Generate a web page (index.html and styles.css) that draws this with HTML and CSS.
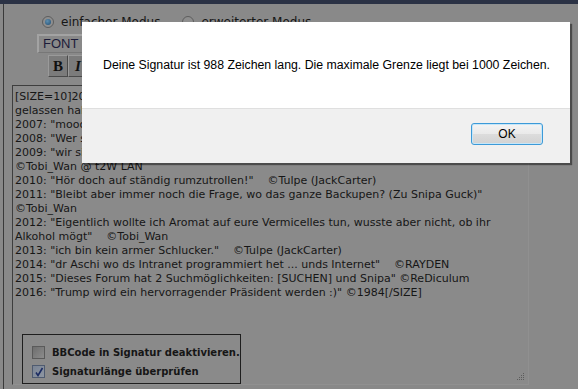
FILE: index.html
```html
<!DOCTYPE html>
<html lang="de">
<head>
  <meta charset="UTF-8">
  <meta name="viewport" content="width=device-width, initial-scale=1.0">
  <link rel="stylesheet" href="styles.css">
</head>
<body>

<div class="topbar"></div>

<div class="page">
  <div class="modes">
    <label class="mode"><span class="radio on"></span>einfacher Modus</label>
    <label class="mode"><span class="radio"></span>erweiterter Modus</label>
  </div>

  <div class="fontbar">
    <span class="select">FONT</span>
  </div>

  <div class="buttons">
    <span class="btn b">B</span><span class="btn i">I</span><span class="btn u">U</span>
  </div>

  <div class="textarea">
    <div class="text">
      <div>[SIZE=10]2006: "Wer hat eigentlich schon wieder die Kaffeetasse auf dem Drucker stehen</div>
      <div>gelassen haben?"    ©Tulpe (JackCarter)</div>
      <div>2007: "mooooooool, ich han doch gseit dass es nid gaht"    ©Tobi_Wan</div>
      <div>2008: "Wer suecht, de findet."    ©RAYDEN</div>
      <div>2009: "wir sind doch alli nur Mensche"</div>
      <div>©Tobi_Wan @ t2W LAN</div>
      <div>2010: "Hör doch auf ständig rumzutrollen!"    ©Tulpe (JackCarter)</div>
      <div>2011: "Bleibt aber immer noch die Frage, wo das ganze Backupen? (Zu Snipa Guck)"</div>
      <div>©Tobi_Wan</div>
      <div>2012: "Eigentlich wollte ich Aromat auf eure Vermicelles tun, wusste aber nicht, ob ihr</div>
      <div>Alkohol mögt"    ©Tobi_Wan</div>
      <div>2013: "ich bin kein armer Schlucker."    ©Tulpe (JackCarter)</div>
      <div>2014: "dr Aschi wo ds Intranet programmiert het ... unds Internet"    ©RAYDEN</div>
      <div>2015: "Dieses Forum hat 2 Suchmöglichkeiten: [SUCHEN] und Snipa" ©ReDiculum</div>
      <div>2016: "Trump wird ein hervorragender Präsident werden :)" ©1984[/SIZE]</div>
    </div>

    <div class="options">
      <label class="opt"><span class="check"></span>BBCode in Signatur deaktivieren.</label>
      <label class="opt"><span class="check on"><svg width="10" height="10" viewBox="0 0 10 10"><path d="M2 5.5 L4 8.5 L8.5 1" fill="none" stroke="#1c2c63" stroke-width="1.6"/></svg></span>Signaturlänge überprüfen</label>
    </div>

    <svg class="grip" width="8" height="8" viewBox="0 0 8 8">
      <rect x="6" y="0" width="1" height="1" fill="#5c5c5c"/>
      <rect x="4" y="2" width="1" height="1" fill="#5c5c5c"/>
      <rect x="6" y="2" width="1" height="1" fill="#5c5c5c"/>
      <rect x="2" y="4" width="1" height="1" fill="#5c5c5c"/>
      <rect x="4" y="4" width="1" height="1" fill="#5c5c5c"/>
      <rect x="6" y="4" width="1" height="1" fill="#5c5c5c"/>
      <rect x="0" y="6" width="1" height="1" fill="#5c5c5c"/>
      <rect x="2" y="6" width="1" height="1" fill="#5c5c5c"/>
      <rect x="4" y="6" width="1" height="1" fill="#5c5c5c"/>
      <rect x="6" y="6" width="1" height="1" fill="#5c5c5c"/>
    </svg>
  </div>
</div>

<!-- alert box over the dimmed page -->
<div class="dialog">
  <div class="dialog-body">Deine Signatur ist 988 Zeichen lang. Die maximale Grenze liegt bei 1000 Zeichen.</div>
  <div class="dialog-foot">
    <button class="ok">OK</button>
  </div>
</div>

</body>
</html>
```

FILE: styles.css
```css
body {
  margin: 0;
  background-color: #898989;
  font-family: 'DejaVu Sans', sans-serif;
  color: #161616;
  height: 389px;
  overflow: hidden;
}

.topbar {
  height: 4px;
  background-color: #2b3245;
}

.page {
  margin-left: 3px;
  border-left: 1px solid #3a3a3a;
  padding-left: 8px;
  height: 385px;
}

.modes {
  display: flex;
  align-items: flex-start;
  height: 17px;
  padding-left: 30px;
  padding-top: 12px;
  font-size: 12px;
}

.mode {
  display: flex;
  align-items: center;
  height: 12px;
  margin-right: 22px;
}

.radio {
  width: 10px;
  height: 10px;
  border: 1px solid #5d5d5d;
  border-radius: 50%;
  background: #8e8e8e;
  margin-right: 7px;
  position: relative;
}

.radio.on::after {
  content: '';
  position: absolute;
  left: 2px;
  top: 2px;
  width: 6px;
  height: 6px;
  border-radius: 50%;
  background: radial-gradient(circle at 40% 35%, #5f8fb0, #1f4c72);
}

.fontbar {
  padding-left: 25px;
  height: 22px;
}

.select {
  display: inline-block;
  width: 90px;
  height: 16px;
  padding-left: 4px;
  line-height: 16px;
  font-family: 'Liberation Sans', sans-serif;
  font-size: 13px;
  color: #1c1c3a;
  border-top: 2px solid #a3a3a3;
  border-left: 2px solid #a3a3a3;
  border-right: 1px solid #777;
  border-bottom: 1px solid #777;
}

.buttons {
  padding-left: 36px;
  height: 30px;
  display: flex;
  align-items: flex-start;
}

.btn {
  width: 18px;
  height: 20px;
  display: inline-flex;
  align-items: center;
  justify-content: center;
  background: #7b7b7b;
  border-top: 1px solid #9a9a9a;
  border-left: 1px solid #9a9a9a;
  border-right: 1px solid #4a4a4a;
  border-bottom: 1px solid #4a4a4a;
  font-family: 'Liberation Serif', serif;
  font-size: 15px;
  color: #111;
}

.btn.b {
  font-weight: bold;
}

.btn.i {
  font-style: italic;
  font-weight: bold;
}

.textarea {
  position: relative;
  width: 517px;
  height: 300px;
  border-top: 1px solid #3e3e3e;
  border-left: 1px solid #3e3e3e;
  border-right: 1px solid #909090;
  border-bottom: 1px solid #909090;
  background-color: #8a8a8a;
  padding-top: 4px;
  box-sizing: border-box;
}

.text {
  padding-left: 2px;
  font-size: 11px;
  line-height: 14px;
}

.text div {
  white-space: pre;
}

.options {
  position: absolute;
  left: 9px;
  top: 248px;
  width: 219px;
  height: 50px;
  border: 1px solid #1e1e1e;
  padding: 8px 0 0 9px;
  box-sizing: border-box;
}

.opt {
  display: flex;
  align-items: center;
  height: 19px;
  font-size: 10px;
  font-weight: bold;
  white-space: nowrap;
}

.check {
  width: 11px;
  height: 11px;
  border: 1px solid #5a5a5a;
  background: linear-gradient(135deg, #6e6e6e, #8c8c8c);
  margin-right: 7px;
  display: inline-flex;
  align-items: center;
  justify-content: center;
}

.check.on {
  border-color: #4f5b70;
  background: linear-gradient(135deg, #7a8494, #8e96a2);
}

.grip {
  position: absolute;
  right: 3px;
  bottom: 3px;
}

.dialog {
  position: absolute;
  left: 82px;
  top: 22px;
  width: 488px;
  height: 141px;
  background-color: #ffffff;
  box-shadow: 2px 2px 1px rgba(0, 0, 0, 0.45);
  font-family: 'Liberation Sans', sans-serif;
  font-size: 12.3px;
  color: #000;
}

.dialog-body {
  height: 86px;
  display: flex;
  align-items: center;
  padding-left: 21px;
}

.dialog-foot {
  height: 55px;
  background-color: #f0f0f0;
  border-top: 1px solid #dfdfdf;
  display: flex;
  justify-content: flex-end;
  padding: 14px 27px 0 0;
  box-sizing: border-box;
}

.ok {
  width: 72px;
  height: 22px;
  border: 1px solid #3c9ad8;
  border-radius: 3px;
  background: linear-gradient(#f4f4f4, #e9e9e9 50%, #dcdcdc 51%, #d2d2d2);
  box-shadow: inset 0 0 0 1px #c6e6f8;
  font-family: 'Liberation Sans', sans-serif;
  font-size: 12px;
  color: #000;
  padding: 0;
}
```
